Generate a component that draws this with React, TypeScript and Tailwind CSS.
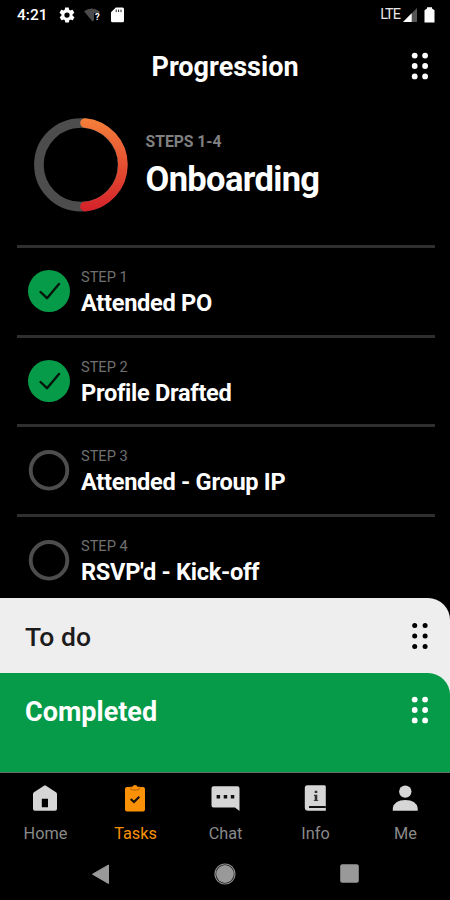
import type { ReactNode } from "react";

type Step = { label: string; title: string; done: boolean };

const STEPS: Step[] = [
  { label: "STEP 1", title: "Attended PO", done: true },
  { label: "STEP 2", title: "Profile Drafted", done: true },
  { label: "STEP 3", title: "Attended - Group IP", done: false },
  { label: "STEP 4", title: "RSVP'd - Kick-off", done: false },
];

export default function App() {
  return (
    <div className="flex h-[900px] w-[450px] flex-col overflow-hidden bg-black font-['Roboto',sans-serif] text-white">
      <StatusBar />

      {/* header */}
      <header className="flex h-[74px] items-center pr-[20px] pb-[2px] pl-[40px]">
        <h1 className="flex-1 pt-[1px] text-center text-[27px] leading-[30px] font-bold">Progression</h1>
        <Dots className="text-white" r={2.9} />
      </header>

      {/* current stage */}
      <section className="flex h-[141px] items-start pl-[33px] pt-[13px]">
        <ProgressRing />
        <div className="ml-[17.500px] pt-[15px]">
          <p className="text-[15.700px] leading-[19px] font-bold text-[#808080]">STEPS 1-4</p>
          <h2 className="mt-[8px] text-[34.500px] leading-[40px] font-bold tracking-[-0.65px]">Onboarding</h2>
        </div>
      </section>

      {/* steps */}
      <ul className="mr-[15px] ml-[17px] h-[353px]">
        {STEPS.map((step) => (
          <StepRow key={step.label} step={step} />
        ))}
      </ul>

      {/* sheets */}
      <section className="flex flex-1 flex-col overflow-hidden rounded-tr-[22px] bg-[#eeeeee]">
        <div className="flex h-[75px] items-center justify-between pr-[20px] pl-[25px]">
          <h3 className="pt-[2px] text-[26.500px] leading-[30px] font-medium text-[#1c1c1c]">To do</h3>
          <Dots className="text-black" r={2.5} />
        </div>
        <div className="flex flex-1 items-start justify-between rounded-tr-[22px] bg-[#059b48] pt-[22px] pr-[20px] pl-[25px]">
          <h3 className="pt-[2px] text-[27px] leading-[30px] font-bold">Completed</h3>
          <Dots className="text-white" r={2.9} />
        </div>
      </section>

      {/* tabs */}
      <nav className="grid h-[78px] grid-cols-5 border-t border-[#6b6b6b] pt-[9px]">
        <Tab label="Home" icon={<HomeIcon />} />
        <Tab label="Tasks" icon={<TasksIcon />} active />
        <Tab label="Chat" icon={<ChatIcon />} />
        <Tab label="Info" icon={<InfoIcon />} />
        <Tab label="Me" icon={<MeIcon />} />
      </nav>

      <SystemNav />
    </div>
  );
}

function StatusBar() {
  return (
    <div className="flex h-[30px] items-center pr-[15px] pl-[17px]">
      <span className="w-[30px] text-[15.500px] leading-[18px] font-medium">4:21</span>
      <svg className="ml-[11px]" width="18" height="18" viewBox="0 0 24 24" fill="#fff">
        <path d="M19.4 13c0-.3.1-.6.1-1s0-.7-.1-1l2.1-1.600c.2-.1.200-.4.100-.6l-2-3.500c-.1-.2-.4-.3-.6-.2l-2.500 1c-.5-.4-1.100-.7-1.700-1l-.4-2.600c0-.2-.2-.4-.5-.4h-4c-.2 0-.4.200-.5.400l-.4 2.600c-.6.300-1.200.6-1.700 1l-2.500-1c-.2-.1-.5 0-.6.200l-2 3.500c-.1.200-.1.500.1.600L4.600 11c0 .3-.1.6-.1 1s0 .7.1 1l-2.100 1.600c-.2.100-.2.400-.1.600l2 3.500c.1.200.4.300.6.200l2.500-1c.5.400 1.100.7 1.700 1l.4 2.600c0 .2.200.4.500.4h4c.2 0 .4-.2.500-.4l.4-2.600c.6-.3 1.200-.6 1.700-1l2.500 1c.2.100.5 0 .6-.2l2-3.500c.1-.2.1-.5-.1-.6zM12 15.500a3.500 3.500 0 110-7 3.500 3.500 0 010 7z" />
      </svg>
      <span className="relative ml-[8px] flex">
        <svg width="16" height="14" viewBox="0 0 16 14">
          <path d="M0 3.300Q7.500-2.300 15.500 3.300V5H10v7l-1.500 1.600z" fill="#4b4b4b" />
        </svg>
        <span className="absolute top-[4px] left-[11px] text-[9.500px] leading-[10px] font-bold">?</span>
      </span>
      <svg className="ml-[11px]" width="13" height="16" viewBox="0 0 13 16">
        <path d="M4.800.5H11.500Q13 .5 13 2v11.700q0 1.500-1.500 1.500h-10Q0 15.200 0 13.700V5.200z" fill="#fff" />
        <path d="M5.200 2.600v2.500M7.600 2.600v2.500M10 2.600v2.500" stroke="#222" strokeWidth="1" />
      </svg>

      <span className="ml-auto text-[14.500px] leading-[18px] tracking-[-1px] text-[#e8e8e8]">LTE</span>
      <svg className="ml-[3px]" width="14" height="14" viewBox="0 0 14 14">
        <path d="M0 14L14 0v14z" fill="#555" />
        <path d="M0 14L8.700 5.300V14z" fill="#fff" />
      </svg>
      <svg className="ml-[7px]" width="11" height="16" viewBox="0 0 11 16">
        <path d="M3 1.500V.3h5v1.200l2.500 1.700V15.500H.5V3.200z" fill="#fff" />
      </svg>
    </div>
  );
}

function Dots({ className, r }: { className: string; r: number }) {
  return (
    <svg className={className} width="20" height="30" viewBox="0 0 20 30" fill="currentColor">
      {[4.700, 15.100].map((cx) => [4.600, 15, 25.400].map((cy) => <circle key={`${cx}-${cy}`} cx={cx} cy={cy} r={r} />))}
    </svg>
  );
}

function ProgressRing() {
  return (
    <svg width="95" height="95" viewBox="0 0 95 95" fill="none" strokeWidth="9.600">
      <defs>
        <linearGradient id="ring" x1="0" y1="0" x2="0" y2="95" gradientUnits="userSpaceOnUse">
          <stop offset="0" stopColor="#f5813a" />
          <stop offset="1" stopColor="#d4202a" />
        </linearGradient>
      </defs>
      <circle cx="47.700" cy="47.800" r="41.800" stroke="#4d4d4d" />
      <path d="M52 6a42 42 0 010 83.600" stroke="url(#ring)" strokeLinecap="round" />
    </svg>
  );
}

function StepRow({ step }: { step: Step }) {
  return (
    <li className="flex h-[89.700px] items-start border-t-[3px] border-[#2f2f2f] pl-[11px]">
      <svg className="mt-[22px]" width="42" height="42" viewBox="0 0 42 42" fill="none">
        {step.done ? (
          <>
            <circle cx="21" cy="21" r="21" fill="#059b48" />
            <path d="M12.500 22L19 28.200 31 14" stroke="#06150b" strokeWidth="2.400" strokeLinecap="round" strokeLinejoin="round" />
          </>
        ) : (
          <circle cx="21" cy="21.300" r="18.300" stroke="#4d4d4d" strokeWidth="3.900" />
        )}
      </svg>
      <div className="ml-[11px] pt-[20px]">
        <p className="text-[14.600px] leading-[18px] text-[#707070]">{step.label}</p>
        <p className="mt-[3px] text-[23.600px] leading-[28px] font-bold tracking-[-0.3px] whitespace-nowrap">{step.title}</p>
      </div>
    </li>
  );
}

function Tab({ label, icon, active = false }: { label: string; icon: ReactNode; active?: boolean }) {
  return (
    <div className={`flex flex-col items-center ${active ? "text-[#fb9107]" : "text-[#d6d6d6]"}`}>
      {icon}
      <span className={`mt-[10px] ml-[1px] text-[16.300px] leading-[19px] ${active ? "" : "text-[#8a8a8a]"}`}>{label}</span>
    </div>
  );
}

/* tab icons */
function HomeIcon() {
  return (
    <svg width="32" height="32" viewBox="0 0 32 32" fill="currentColor">
      <path fillRule="evenodd" d="M15 3.700q1-.7 2 0l10 6.600q1 .7 1 1.900V26.700q0 2-2 2H6q-2 0-2-2V12.200q0-1.200 1-1.900zM12.800 16.700v8.500h6.200v-8.500z" />
    </svg>
  );
}

function TasksIcon() {
  return (
    <svg width="32" height="32" viewBox="0 0 32 32" fill="currentColor">
      <rect x="6" y="5" width="20" height="24.500" rx="2" />
      <path d="M11 4.700h2.500q.5-1.700 2.500-1.700t2.500 1.700H21V8H11z" />
      <path d="M11.500 5.500q0 2.500 2 2.500h5q2 0 2-2.500" stroke="#8a4d00" strokeWidth=".7" fill="none" />
      <path d="M11.700 17l3.300 3 5.300-5.300" stroke="#17120a" strokeWidth="2.200" fill="none" />
    </svg>
  );
}

function ChatIcon() {
  return (
    <svg width="32" height="32" viewBox="0 0 32 32" fill="currentColor">
      <path d="M4.500 4.200h24q2 0 2 2V29L26 25.600H4.500q-2 0-2-2V6.200q0-2 2-2z" />
      <path d="M7.600 13h3.500v3.500H7.600zM14.700 13h3.500v3.500h-3.500zM21.800 13h3.500v3.500h-3.500z" fill="#111" />
    </svg>
  );
}

function InfoIcon() {
  return (
    <svg width="32" height="32" viewBox="0 0 32 32" fill="currentColor">
      <path d="M8.500 3.300h17q1.300 0 1.300 1.500V28.700H9q-3.200 0-3.200-3.300V6Q5.800 3.300 8.500 3.300z" />
      <path d="M10 25h16.800" stroke="#111" strokeWidth="2" />
      <path d="M15.700 8.700h2.600v2.400h-2.600zM15 12.800h3.300V19H15.700v-5H15zM14.800 18.200h4.500V19h-4.500z" fill="#333" />
    </svg>
  );
}

function MeIcon() {
  return (
    <svg width="32" height="32" viewBox="0 0 32 32" fill="currentColor">
      <circle cx="16.300" cy="9.600" r="6.200" />
      <path d="M3.800 28.700V26Q5.500 18 16.300 18T28.700 26v2.700z" />
    </svg>
  );
}

function SystemNav() {
  return (
    <div className="flex h-[50px] items-center justify-between pr-[91px] pb-[3px] pl-[90px]">
      <svg width="20" height="22" viewBox="0 0 20 22">
        <path d="M2.500 11.200L18.500 2v18.500z" fill="#999" stroke="#999" strokeLinejoin="round" />
      </svg>
      <svg width="22" height="22" viewBox="0 0 22 22" fill="none">
        <circle cx="11" cy="11" r="10" stroke="#8c8c8c" strokeWidth="1.200" />
        <circle cx="11" cy="11" r="8.900" fill="#999" />
      </svg>
      <svg width="19" height="19" viewBox="0 0 19 19">
        <rect x=".2" y=".2" width="18.600" height="18.600" rx="2" fill="#999" />
      </svg>
    </div>
  );
}
